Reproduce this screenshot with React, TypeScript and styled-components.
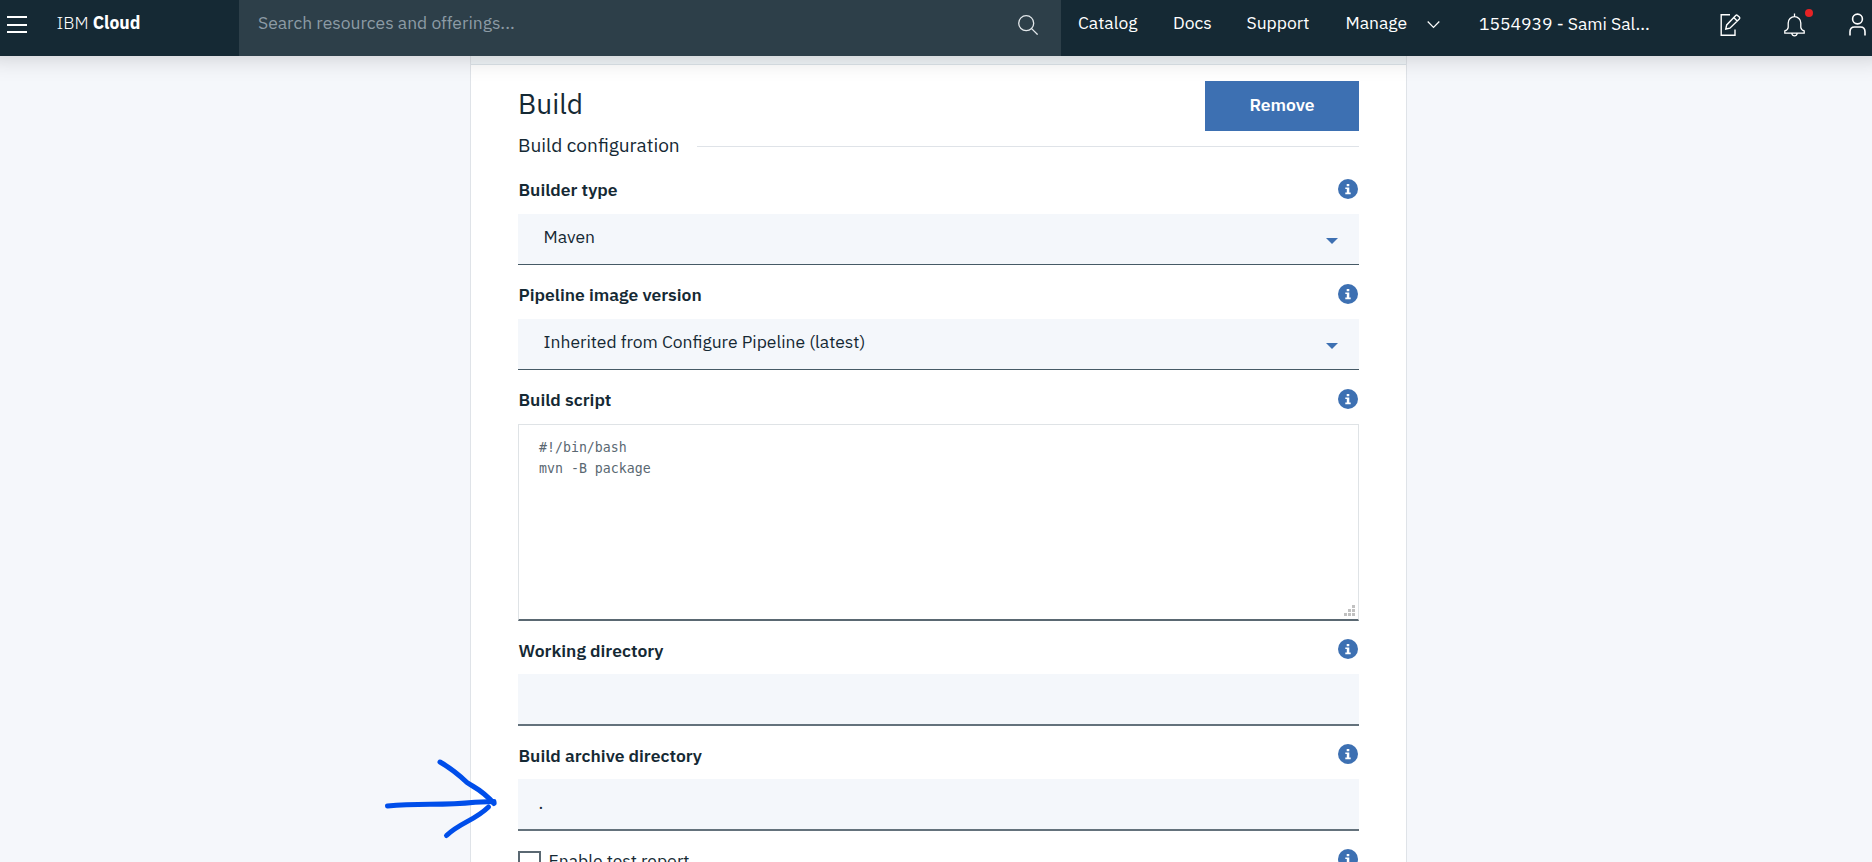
import React from 'react';
import styled, { createGlobalStyle } from 'styled-components';

const GlobalStyle = createGlobalStyle`
  *, *::before, *::after { box-sizing: border-box; }
  html, body { margin: 0; height: 100%; overflow: hidden; }
  body {
    background: #f5f7fb;
    color: #152934;
    font-family: 'IBM Plex Sans', Roboto, 'Liberation Sans', sans-serif;
    font-size: 17.5px;
  }
`;

const Page = styled.div`
  display: flex;
  flex-direction: column;
  height: 862px;
  overflow: hidden;
`;

const Header = styled.header`
  position: relative;
  z-index: 1;
  flex: none;
  display: flex;
  height: 56px;
  background: #152934;
  color: #fff;
  box-shadow: 0 -16px 24px 16px rgba(0, 0, 0, 0.2);
`;

const Brand = styled.div`
  display: flex;
  width: 239px;
  padding: 0 0 12px 7px;
  align-items: center;
`;

const MenuButton = styled.button`
  display: flex;
  flex-direction: column;
  gap: 5.5px;
  width: 20px;
  margin: 5px 29.5px 0 0;
  padding: 0;
  border: 0;
  background: none;
`;

const MenuBar = styled.span`
  height: 2px;
  background: #fff;
`;

const BrandName = styled.span`
  font-weight: 300;
  white-space: pre;
  b { font-weight: 700; }
`;

const Search = styled.div`
  display: flex;
  width: 822px;
  padding: 0 23px 12px 19px;
  align-items: center;
  justify-content: space-between;
  background: #2d3f49;
  color: #8c9ba5;
  svg { margin-top: 5px; }
`;

const Nav = styled.nav`
  display: flex;
  flex: 1;
  align-items: center;
  padding: 0 0 12px 17px;
`;

const NavItem = styled.a<{ $width: number; $drop?: number }>`
  flex: none;
  width: ${p => p.$width}px;
  padding-top: ${p => p.$drop ?? 0}px;
  white-space: nowrap;
`;

const IconSlot = styled.span<{ $width: number }>`
  position: relative;
  flex: none;
  width: ${p => p.$width}px;
  height: 24px;
  margin-top: 5px;
  svg { display: block; }
`;

const Dot = styled.span`
  position: absolute;
  left: 21px;
  top: -4px;
  width: 8px;
  height: 8px;
  border-radius: 50%;
  background: #e62325;
`;

const Card = styled.main`
  width: 937px;
  height: 806px;
  margin-left: 470px;
  border: solid #dfe3e8;
  border-width: 0 1px;
  background: #fff;
`;

const CardTop = styled.div`
  height: 9px;
  border-bottom: 1px solid #dce3e8;
  background: #f0f5f8;
`;

const Form = styled.form`
  padding: 16px 47px 0;
`;

const TitleRow = styled.div`
  display: flex;
  justify-content: space-between;
  height: 50px;
`;

const Title = styled.h2`
  margin: 0;
  font-size: 28px;
  font-weight: 400;
  line-height: 46px;
`;

const RemoveButton = styled.button`
  width: 154px;
  height: 50px;
  padding: 0 0 3px;
  border: 0;
  background: #3d70b2;
  color: #fff;
  font: inherit;
  font-weight: 600;
`;

const SectionHeading = styled.h3`
  display: flex;
  align-items: center;
  gap: 17px;
  height: 30px;
  margin: 0 0 18px;
  padding-bottom: 4px;
  font-size: 19.1px;
  font-weight: 400;
  &::after {
    content: '';
    flex: 1;
    height: 1px;
    margin-top: 5px;
    background: #dfe3e8;
  }
`;

const Field = styled.section<{ $gap: number }>`
  margin-bottom: ${p => p.$gap}px;
`;

const LabelRow = styled.div`
  display: flex;
  justify-content: space-between;
  height: 35px;
  padding: 0 1px 0 0.5px;
`;

const Label = styled.label<{ $drop?: number }>`
  font-weight: 600;
  line-height: 21px;
  padding-top: ${p => p.$drop ?? 0}px;
`;

const Select = styled.div`
  display: flex;
  align-items: center;
  justify-content: space-between;
  height: 51px;
  padding: 0 21px 6px 25.5px;
  border-bottom: 1px solid #465a66;
  background: #f4f7fb;
  svg { margin-top: 9px; }
`;

const Script = styled.div`
  display: flex;
  justify-content: space-between;
  height: 197px;
  padding: 12px 2px 2px 20px;
  border: 1px solid #dfe3e6;
  border-bottom: 2px solid #5a6872;
  svg { align-self: flex-end; }
`;

const Code = styled.pre`
  margin: 0;
  color: #5a6872;
  font: 13.25px/21px 'DejaVu Sans Mono', monospace;
`;

const TextInput = styled.div`
  height: 52px;
  padding: 0 20.5px;
  border-bottom: 2px solid #64727c;
  background: #f4f7fb;
  line-height: 48px;
`;

const CheckRow = styled.div`
  display: flex;
  justify-content: space-between;
  padding-right: 1px;
`;

const CheckLabel = styled.label`
  display: flex;
  gap: 7.5px;
  padding-top: 2px;
  line-height: 19px;
`;

const CheckBox = styled.span`
  width: 23px;
  height: 23px;
  border: 2px solid #5a6872;
`;

const Arrow = styled.svg`
  position: absolute;
  left: 380px;
  top: 755px;
  z-index: 2;
`;

const InfoIcon = () => (
  <svg width="20" height="20" viewBox="0 0 20 20">
    <circle cx="10" cy="10" r="10" fill="#3d70b2" />
    <path d="M8.7 5h2.6v2.2H8.7zM7.3 8.5h4v5.1h1.4v1.6H7.3v-1.6h1.5v-3.5H7.3z" fill="#fff" />
  </svg>
);

const Caret = () => (
  <svg width="12" height="6" viewBox="0 0 12 6"><path d="M0 0h12L6 6z" fill="#3d70b2" /></svg>
);

const Grip = () => (
  <svg width="12" height="12" viewBox="0 0 12 12" fill="#c1c1c1">
    <path d="M8 0h3v3H8zM4 4h3v3H4zM8 4h3v3H8zM0 8h3v3H0zM4 8h3v3H4zM8 8h3v3H8z" />
  </svg>
);

const FieldHead = ({ text, drop }: { text: string; drop?: number }) => (
  <LabelRow><Label $drop={drop}>{text}</Label><InfoIcon /></LabelRow>
);

export default function App() {
  return (
    <Page>
      <GlobalStyle />
      <Header>
        <Brand>
          <MenuButton aria-label="Menu"><MenuBar /><MenuBar /><MenuBar /></MenuButton>
          <BrandName>IBM <b>Cloud</b></BrandName>
        </Brand>
        <Search>
          Search resources and offerings...
          <svg width="20" height="20" viewBox="0 0 20 20" fill="none" stroke="#e3e8eb" strokeWidth="1.3">
            <circle cx="8.2" cy="8.2" r="7.5" /><path d="M13.6 13.6l6 6" />
          </svg>
        </Search>
        <Nav>
          <NavItem $width={95}>Catalog</NavItem>
          <NavItem $width={73.5}>Docs</NavItem>
          <NavItem $width={99}>Support</NavItem>
          <NavItem $width={81.5}>Manage</NavItem>
          <IconSlot $width={52}>
            <svg width="13" height="24" viewBox="0 0 13 24" fill="none" stroke="#fff" strokeWidth="1.2"><path d="M.7 8.5l5.8 6 5.8-6" /></svg>
          </IconSlot>
          <NavItem $width={241} $drop={2}>1554939 - Sami Sal...</NavItem>
          <IconSlot $width={64}>
            <svg width="21" height="24" viewBox="0 0 21 24" fill="none" stroke="#fff" strokeWidth="1.4">
              <path d="M10 1.8H1.2V22.3H15V16.6M5.8 16L6.7 11.9L15.7 2.4Q16.6 1.5 17.5 2.4L19.3 4.1Q20.2 5 19.3 5.9L9.9 15.2ZM13.8 4.5L17.2 7.9" />
            </svg>
          </IconSlot>
          <IconSlot $width={64.5}>
            <svg width="21" height="24" viewBox="0 0 21 24" fill="none" stroke="#fff" strokeWidth="1.3">
              <path d="M10.5.6V3.8M4.2 14.4V10a6.3 6.3 0 0 1 12.6 0v4.4q.5 2.7 3.4 3.5v2.3H.8v-2.3q2.9-.8 3.4-3.5zM7.7 20.4q.6 2.4 2.8 2.4t2.8-2.4" />
            </svg>
            <Dot />
          </IconSlot>
          <IconSlot $width={17}>
            <svg width="17" height="24" viewBox="0 0 17 24" fill="none" stroke="#fff" strokeWidth="1.6">
              <circle cx="8.5" cy="6" r="4.9" /><path d="M1 22.5V18.8Q1 14 5.5 14h6q4.5 0 4.5 4.8v3.7" />
            </svg>
          </IconSlot>
        </Nav>
      </Header>

      <Card>
        <CardTop />
        <Form>
          <TitleRow>
            <Title>Build</Title>
            <RemoveButton type="button">Remove</RemoveButton>
          </TitleRow>
          <SectionHeading>Build configuration</SectionHeading>

          <Field $gap={19}>
            <FieldHead text="Builder type" />
            <Select>Maven<Caret /></Select>
          </Field>
          <Field $gap={19}>
            <FieldHead text="Pipeline image version" />
            <Select>Inherited from Configure Pipeline (latest)<Caret /></Select>
          </Field>
          <Field $gap={18}>
            <FieldHead text="Build script" />
            <Script><Code>{'#!/bin/bash\nmvn -B package'}</Code><Grip /></Script>
          </Field>
          <Field $gap={18}>
            <FieldHead text="Working directory" drop={1} />
            <TextInput />
          </Field>
          <Field $gap={18}>
            <FieldHead text="Build archive directory" drop={1} />
            <TextInput>.</TextInput>
          </Field>
          <CheckRow>
            <CheckLabel><CheckBox />Enable test report</CheckLabel>
            <InfoIcon />
          </CheckRow>
        </Form>
      </Card>

      <Arrow width="125" height="90" viewBox="380 755 125 90" fill="none" stroke="#004eea" strokeWidth="5" strokeLinecap="round" strokeLinejoin="round">
        <path d="M387.5 806Q404 804.3 430 804.3T475 802.3L494 801.5" />
        <path d="M440 762Q454 770 467 782.5C475 788 481 789 494 803.5" />
        <path d="M446.5 835.5C461 822 474 821 488.5 807" />
      </Arrow>
    </Page>
  );
}
